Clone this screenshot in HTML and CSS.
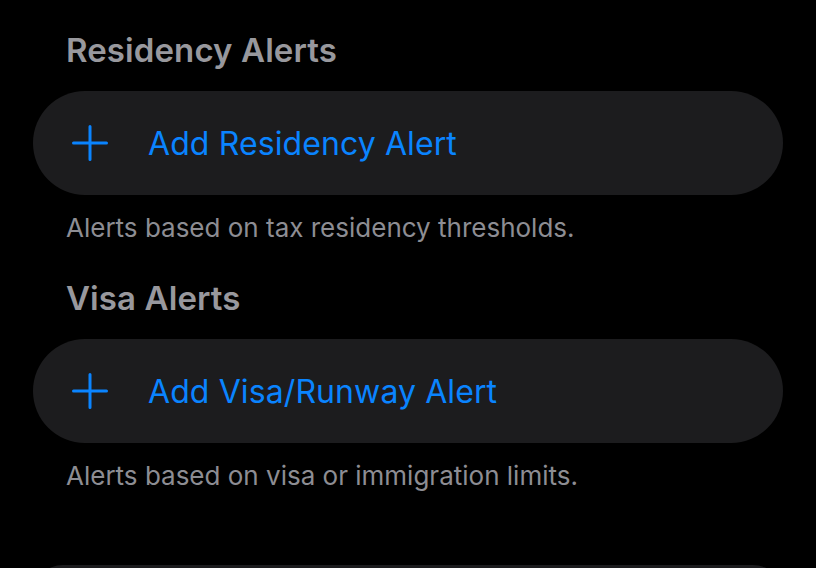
FILE: index.html
```html
<!DOCTYPE html>
<html lang="en">
<head>
<meta charset="utf-8">
<title>Alerts</title>
<link rel="stylesheet" href="styles.css">
</head>
<body>
<main class="page">
  <section class="group">
    <h2 class="group-title">Residency Alerts</h2>
    <button class="row" type="button">
      <svg class="plus" viewBox="0 0 36 36" aria-hidden="true"><path d="M18 1.5V34.5M1.5 18H34.5"/></svg>
      <span class="row-label">Add Residency Alert</span>
    </button>
    <p class="group-note">Alerts based on tax residency thresholds.</p>
  </section>
  <section class="group">
    <h2 class="group-title">Visa Alerts</h2>
    <button class="row" type="button">
      <svg class="plus" viewBox="0 0 36 36" aria-hidden="true"><path d="M18 1.5V34.5M1.5 18H34.5"/></svg>
      <span class="row-label">Add Visa/Runway Alert</span>
    </button>
    <p class="group-note">Alerts based on visa or immigration limits.</p>
  </section>
  <div class="row row-next"></div>
</main>
</body>
</html>
```
FILE: styles.css
```css
* { box-sizing: border-box; }
html, body {
  margin: 0;
  padding: 0;
  background: #000;
  height: 100%;
  overflow: hidden;
}
body {
  font-family: Inter, "Noto Sans", "Liberation Sans", sans-serif;
  color: #fff;
}
.page {
  padding: 30px 33px 0 33px;
  display: flex;
  flex-direction: column;
  gap: 34px;
}
.group {
  display: flex;
  flex-direction: column;
}
.group-title {
  margin: 0 0 21px 33px;
  font-size: 33px;
  line-height: 40px;
  font-weight: 600;
  color: #98989d;
  letter-spacing: 0.1px;
}
.row {
  display: flex;
  align-items: center;
  height: 104px;
  width: 100%;
  padding: 0 0 0 39px;
  border: 0;
  border-radius: 52px;
  background: #1c1c1e;
  font: inherit;
  text-align: left;
  cursor: pointer;
}
.plus {
  width: 36px;
  height: 36px;
  flex: none;
  fill: none;
  stroke: #0a84ff;
  stroke-width: 3;
  stroke-linecap: round;
}
.row-label {
  margin-left: 40px;
  font-size: 32px;
  font-weight: 400;
  color: #0a84ff;
  letter-spacing: 0.1px;
}
.group-note {
  margin: 17px 0 0 33px;
  font-size: 26px;
  line-height: 32px;
  color: #8d8d93;
}
.row-next {
  height: 60px;
  margin-top: 39px;
}
```
